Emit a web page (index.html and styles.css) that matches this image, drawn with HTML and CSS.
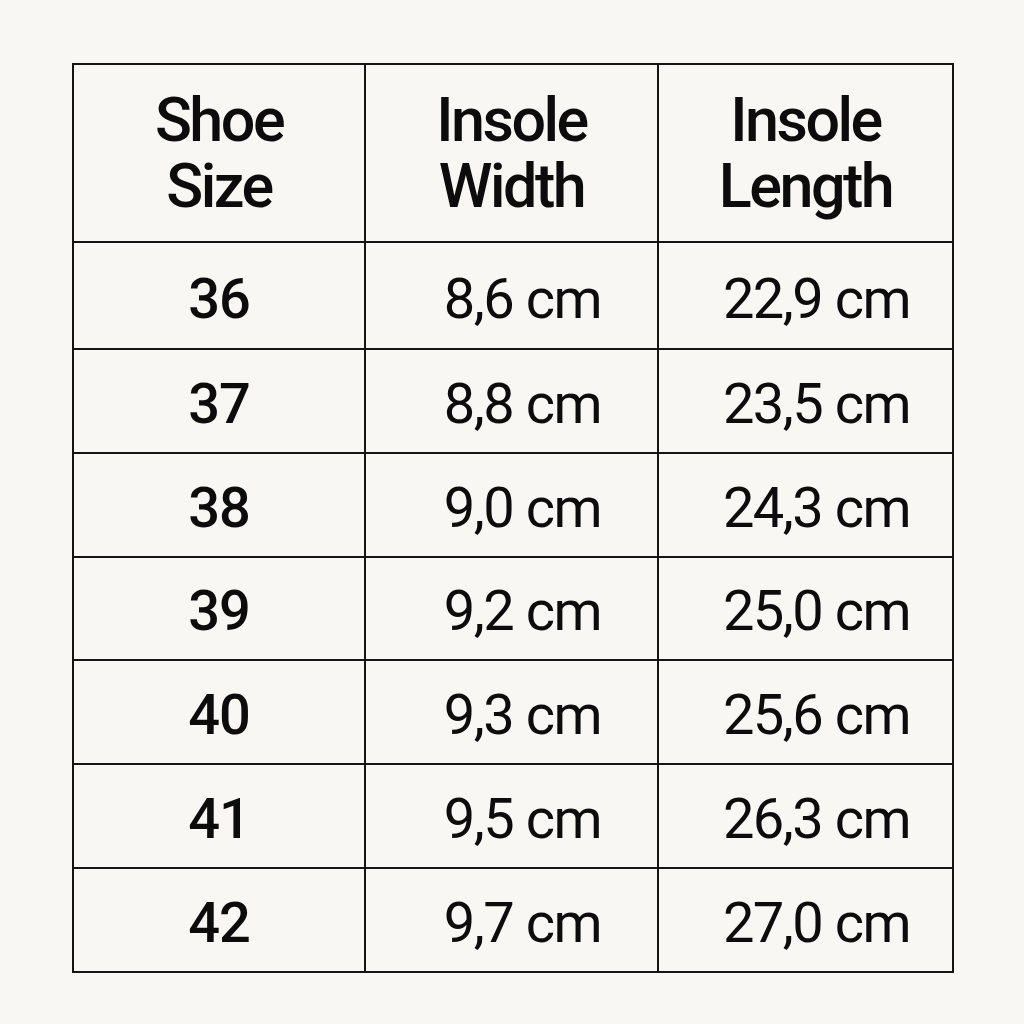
FILE: index.html
```html
<!DOCTYPE html>
<html>
<head>
<meta charset="utf-8">
<link rel="stylesheet" href="styles.css">
</head>
<body>
<table class="sizes">
  <colgroup><col class="c1"><col class="c2"><col class="c3"></colgroup>
  <thead>
    <tr><th>Shoe<br>Size</th><th>Insole<br>Width</th><th>Insole<br>Length</th></tr>
  </thead>
  <tbody>
    <tr class="first"><td class="size">36</td><td class="val">8,6 cm</td><td class="val">22,9 cm</td></tr>
    <tr><td class="size">37</td><td class="val">8,8 cm</td><td class="val">23,5 cm</td></tr>
    <tr><td class="size">38</td><td class="val">9,0 cm</td><td class="val">24,3 cm</td></tr>
    <tr><td class="size">39</td><td class="val">9,2 cm</td><td class="val">25,0 cm</td></tr>
    <tr><td class="size">40</td><td class="val">9,3 cm</td><td class="val">25,6 cm</td></tr>
    <tr><td class="size">41</td><td class="val">9,5 cm</td><td class="val">26,3 cm</td></tr>
    <tr><td class="size">42</td><td class="val">9,7 cm</td><td class="val">27,0 cm</td></tr>
  </tbody>
</table>
</body>
</html>
```
FILE: styles.css
```css
html, body {
  margin: 0;
  background: #f9f7f4;
}
body {
  padding: 63px 0 0 72px;
  font-family: Roboto, "Liberation Sans", sans-serif;
  color: #0c0c0c;
}
.sizes {
  border-collapse: collapse;
  width: 880px;
  table-layout: fixed;
}
.c1 { width: 292px; }
.c2 { width: 293px; }
.c3 { width: 295px; }
.sizes th, .sizes td {
  border: 2px solid #141414;
  text-align: center;
  vertical-align: middle;
  padding: 0;
}
.sizes th {
  height: 176px;
  font-size: 61px;
  font-weight: 500;
  line-height: 66px;
  letter-spacing: -2.5px;
}
.sizes td {
  height: 103.8px;
  padding-top: 6px;
  font-size: 56px;
  line-height: 56px;
  box-sizing: border-box;
}
.sizes .first td {
  height: 107px;
}
.size {
  font-weight: 500;
  letter-spacing: -1px;
}
.sizes td.val {
  font-weight: 400;
  letter-spacing: -1.5px;
  padding-left: 22px;
}
```
